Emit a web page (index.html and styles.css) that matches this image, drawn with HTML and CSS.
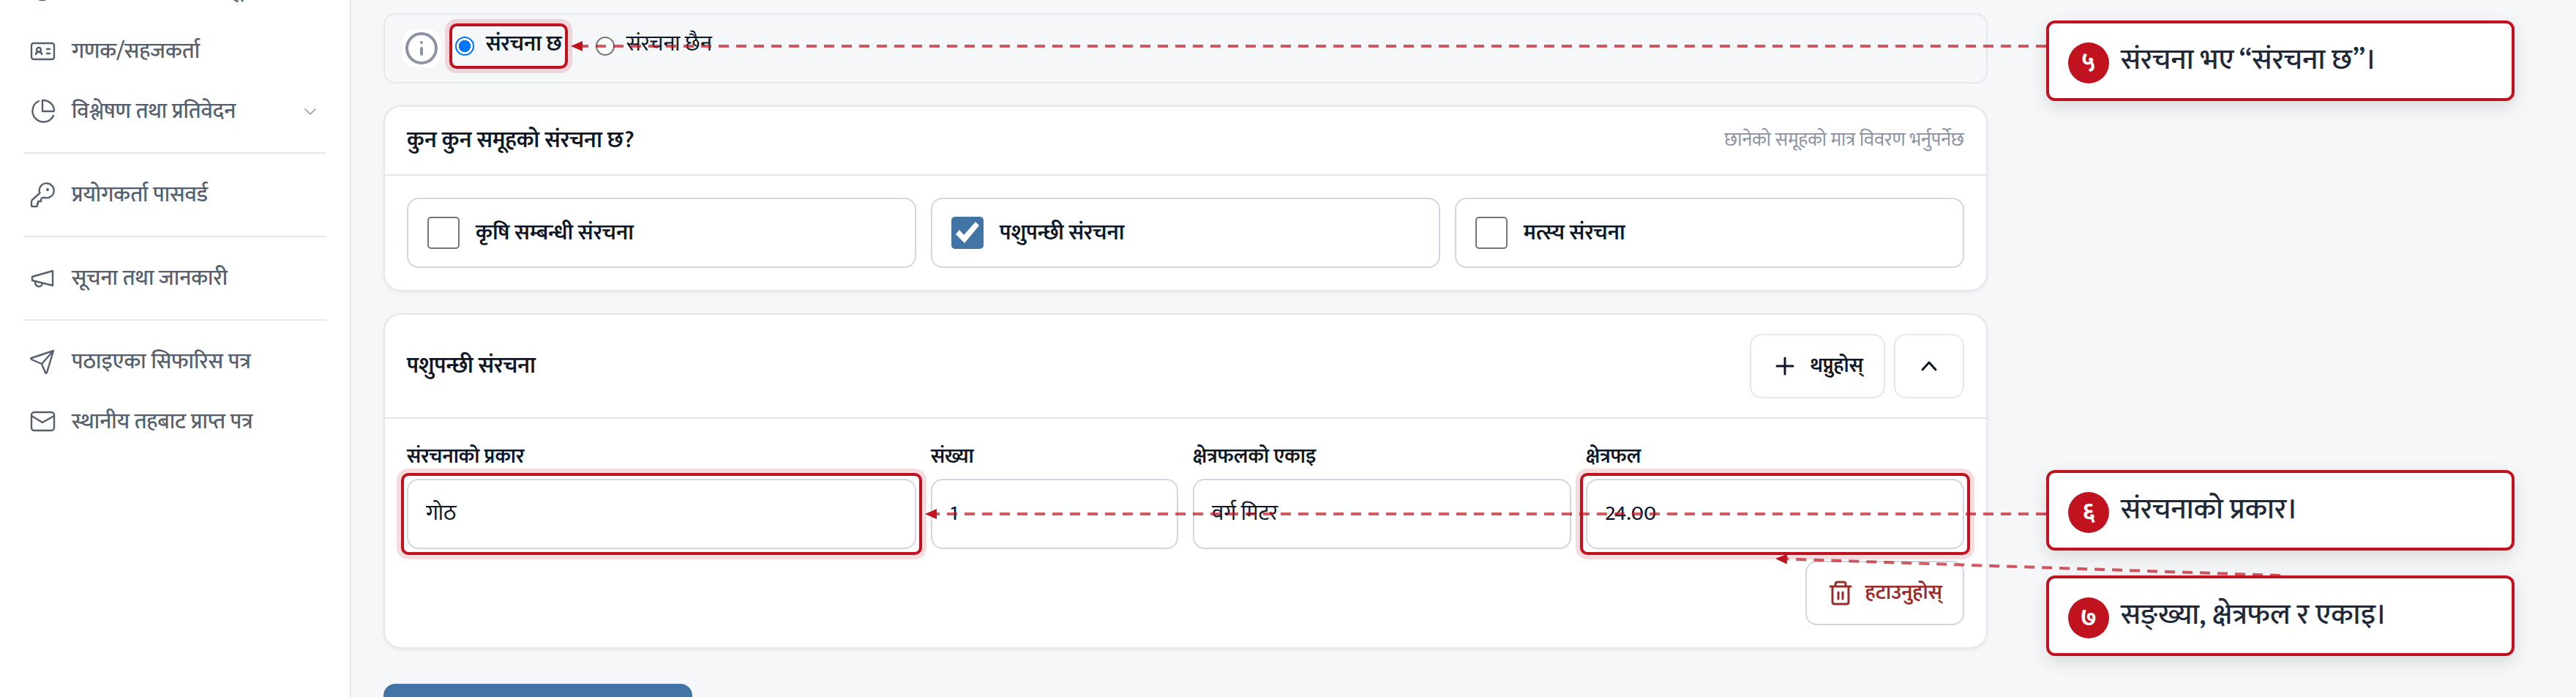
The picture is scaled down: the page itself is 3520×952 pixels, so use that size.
FILE: index.html
```html
<!DOCTYPE html>
<html lang="ne">
<head>
    <meta charset="UTF-8">
    <meta name="viewport" content="width=device-width, initial-scale=1.0">
    <title>पशुपन्छी संरचना</title>
    <link rel="stylesheet" href="styles.css">
</head>

<body>
    <div class="page">
        <nav class="sidebar">
            <a href="#" class="nav-item">
                <svg class="icon" viewBox="0 0 36 36"><circle cx="18" cy="18" r="14"/></svg>
                <span>स्थानीय निकायका समूह</span>
            </a>
            <a href="#" class="nav-item">
                <svg class="icon" viewBox="0 0 36 36">
                    <rect x="3" y="7" width="31" height="22" rx="3"/>
                    <circle cx="13" cy="16" r="3"/>
                    <path d="M9 22c0-4 8-4 8 0M24 15h4M24 21h4"/>
                </svg>
                <span>गणक/सहजकर्ता</span>
            </a>
            <a href="#" class="nav-item">
                <svg class="icon" viewBox="0 0 36 36">
                    <path d="M13 4a15 15 0 1 0 20 20"/>
                    <path d="M18 3v15h15c1 0 1-1 1-2A15 15 0 0 0 20 3c-1 0-2 0-2 0z"/>
                </svg>
                <span>विश्लेषण तथा प्रतिवेदन</span>
                <svg class="chevron" viewBox="0 0 16 16"><path d="M1 5l7 7 7-7"/></svg>
            </a>
            <hr>
            <a href="#" class="nav-item">
                <svg class="icon" viewBox="0 0 36 36">
                    <path d="M14 15a10 10 0 1 1 7 7h-3l-2 2v3h-4v3h-1v3c0 1 0 1-1 1H4c-1 0-1 0-1-1v-5c0-1 0-2 1-3l10-9c1-1 0-1 0-1z"/>
                    <circle class="dot" cx="25" cy="11" r="2"/>
                </svg>
                <span>प्रयोगकर्ता पासवर्ड</span>
            </a>
            <hr>
            <a href="#" class="nav-item">
                <svg class="icon" viewBox="0 0 36 36">
                    <path d="M4 16l28-8v20L4 21z"/>
                    <path d="M8 23c0 8 9 8 10 2"/>
                </svg>
                <span>सूचना तथा जानकारी</span>
            </a>
            <hr>
            <a href="#" class="nav-item">
                <svg class="icon" viewBox="0 0 36 36">
                    <path d="M33 3L3 13c-1 0-1 1 0 2l14 6 5 12c0 1 1 1 2 0L33 3zM17 21L33 3"/>
                </svg>
                <span>पठाइएका सिफारिस पत्र</span>
            </a>
            <a href="#" class="nav-item">
                <svg class="icon" viewBox="0 0 36 36">
                    <rect x="3" y="5" width="31" height="25" rx="4"/>
                    <path d="M3 10l15 9 16-9"/>
                </svg>
                <span>स्थानीय तहबाट प्राप्त पत्र</span>
            </a>
        </nav>

        <main class="content">
            <div class="choice-bar">
                <svg class="info" viewBox="0 0 52 52">
                    <circle cx="26" cy="26" r="20"/>
                    <path d="M26 26v8"/>
                    <circle class="dot" cx="26" cy="18" r="2"/>
                </svg>
                <div class="radio-group">
                    <label class="radio radio-on highlight">
                        <input type="radio" name="structure" checked>
                        संरचना छ
                    </label>
                    <label class="radio">
                        <input type="radio" name="structure">
                        संरचना छैन
                    </label>
                </div>
            </div>

            <section class="card">
                <div class="card-header">
                    <h2>कुन कुन समूहको संरचना छ?</h2>
                    <span class="hint">छानेको समूहको मात्र विवरण भर्नुपर्नेछ</span>
                </div>
                <div class="card-body checks">
                    <label class="check">
                        <input type="checkbox">
                        कृषि सम्बन्धी संरचना
                    </label>
                    <label class="check">
                        <input type="checkbox" checked>
                        पशुपन्छी संरचना
                    </label>
                    <label class="check">
                        <input type="checkbox">
                        मत्स्य संरचना
                    </label>
                </div>
            </section>

            <section class="card">
                <div class="card-header">
                    <h2>पशुपन्छी संरचना</h2>
                    <div class="actions">
                        <button type="button" class="btn">
                            <svg class="btn-icon" viewBox="0 0 36 36"><path d="M18 7v22M7 18h22"/></svg>
                            थप्नुहोस्
                        </button>
                        <button type="button" class="btn" aria-label="बन्द गर्नुहोस्">
                            <svg class="btn-icon" viewBox="0 0 36 36"><path d="M9 23l9-10 9 10"/></svg>
                        </button>
                    </div>
                </div>
                <div class="card-body">
                    <div class="fields">
                        <div class="field wide">
                            <label for="type">संरचनाको प्रकार</label>
                            <div class="highlight"><input type="text" id="type" value="गोठ"></div>
                        </div>
                        <div class="field narrow">
                            <label for="count">संख्या</label>
                            <div><input type="text" id="count" value="1"></div>
                        </div>
                        <div class="field">
                            <label for="unit">क्षेत्रफलको एकाइ</label>
                            <div><input type="text" id="unit" value="वर्ग मिटर"></div>
                        </div>
                        <div class="field">
                            <label for="area">क्षेत्रफल</label>
                            <div class="highlight"><input type="text" id="area" value="24.00"></div>
                        </div>
                    </div>
                    <div class="row-end">
                        <button type="button" class="btn btn-delete">
                            <svg class="btn-icon" viewBox="0 0 36 36">
                                <path d="M4 9h28M11 9V6c0-2 1-3 3-3h8c2 0 3 1 3 3v3M7 9v21c0 2 1 3 3 3h16c2 0 3-1 3-3V9M15 17v9M21 17v9"/>
                            </svg>
                            हटाउनुहोस्
                        </button>
                    </div>
                </div>
            </section>

            <button type="submit" class="btn-save" aria-label="सुरक्षित गर्नुहोस्"></button>
        </main>

        <!-- guide arrows and notes over the form -->
        <svg class="arrows">
            <defs>
                <marker id="head" markerUnits="userSpaceOnUse" markerWidth="16" markerHeight="14" refX="16" refY="7" orient="auto">
                    <path d="M0 0L16 7L0 14z"/>
                </marker>
            </defs>
            <line x1="2796" y1="63" x2="780" y2="63" marker-end="url(#head)"/>
            <line x1="2796" y1="702" x2="1264" y2="702" marker-end="url(#head)"/>
            <line x1="3116" y1="786" x2="2426" y2="763" marker-end="url(#head)"/>
        </svg>
        <div class="note note-5"><b>५</b><span>संरचना भए “संरचना छ”।</span></div>
        <div class="note note-6"><b>६</b><span>संरचनाको प्रकार।</span></div>
        <div class="note note-7"><b>७</b><span>सङ्ख्या, क्षेत्रफल र एकाइ।</span></div>
    </div>
</body>
</html>
```

FILE: styles.css
```css
* {
    box-sizing: border-box;
}
body {
    margin: 0;
    font-family: "Mukta", "Noto Sans", "Open Sans", sans-serif;
    font-size: 30px;
    line-height: 40px;
    color: #0d1728;
    background-color: #f5f7f9;
}
.page {
    position: relative;
    display: flex;
    height: 100vh;
    overflow: hidden;
}
svg {
    flex: none;
    fill: none;
    stroke: currentColor;
    stroke-linecap: round;
    stroke-linejoin: round;
}
svg .dot {
    fill: currentColor;
    stroke: none;
}

/* sidebar */
.sidebar {
    flex: none;
    width: 480px;
    padding: 0 32px;
    background-color: white;
    border-right: 2px solid #e6e7ec;
}
.nav-item {
    display: flex;
    align-items: center;
    gap: 22px;
    height: 80px;
    padding: 0 14px 0 8px;
    margin-bottom: 2px;
    color: #565f6e;
    font-weight: 500;
    text-decoration: none;
}
.nav-item:first-child {
    margin-top: -54px;
    margin-bottom: 4px;
}
.icon {
    width: 36px;
    height: 36px;
    stroke-width: 2.4;
}
.chevron {
    width: 16px;
    height: 16px;
    margin-left: auto;
    stroke-width: 1.6;
    color: #9298a6;
}
.sidebar hr {
    height: 2px;
    margin: 16px 0;
    border: none;
    background-color: #e6e7ec;
}

/* form */
.content {
    flex: 1;
    padding: 18px 804px 0 44px;
}
.choice-bar {
    display: flex;
    align-items: flex-start;
    gap: 20px;
    padding: 20px 24px;
    border: 2px solid #e6e7ec;
    border-radius: 16px;
}
.info {
    width: 52px;
    height: 52px;
    border-radius: 16px;
    background-color: white;
    color: #8d93a5;
    stroke-width: 4;
}
.radio-group {
    display: flex;
    gap: 46px;
}
.radio {
    display: flex;
    gap: 16px;
    height: 46px;
}
.radio-on {
    font-weight: 600;
}
.radio input {
    appearance: none;
    width: 26px;
    height: 26px;
    margin: 10px 0 0;
    border: 2px solid #767676;
    border-radius: 50%;
    background-color: white;
}
.radio input:checked {
    border-color: #0075ff;
    background: radial-gradient(circle, #0075ff 8px, white 8px);
}
.highlight {
    position: relative;
}
.highlight::after {
    content: "";
    position: absolute;
    inset: -8px;
    border: 4px solid #c1121f;
    border-radius: 10px;
    box-shadow: 0 0 0 6px rgba(193, 18, 31, 0.15);
    pointer-events: none;
}
.card {
    margin-top: 30px;
    background-color: white;
    border: 2px solid #e6e7ec;
    border-radius: 24px;
    box-shadow: 0 2px 6px rgba(16, 24, 40, 0.06);
}
.card-header {
    display: flex;
    align-items: center;
    justify-content: space-between;
    padding: 26px 30px;
    border-bottom: 2px solid #e6e7ec;
}
.card-header h2 {
    margin: 0;
    font-size: 31px;
    font-weight: 600;
}
.hint {
    font-size: 26px;
    color: #8d93a5;
}
.card-body {
    padding: 30px;
}
.checks {
    display: grid;
    grid-template-columns: repeat(3, 1fr);
    gap: 20px;
}
.check {
    display: flex;
    align-items: center;
    gap: 22px;
    height: 96px;
    padding: 0 26px;
    border: 2px solid #d2d6e0;
    border-radius: 16px;
    font-weight: 600;
}
.check input {
    appearance: none;
    width: 44px;
    height: 44px;
    margin: 0;
    border: 2px solid #767676;
    border-radius: 5px;
}
.check input:checked {
    border: none;
    background-color: #4274a6;
}
.check input:checked::before {
    content: "";
    display: block;
    height: 44px;
    background-color: white;
    clip-path: polygon(6px 24px, 11px 18px, 17px 25px, 33px 7px, 38px 12px, 18px 36px);
}
.actions {
    display: flex;
    gap: 12px;
}
.btn {
    display: flex;
    align-items: center;
    gap: 16px;
    height: 88px;
    padding: 0 28px;
    border: 2px solid #e6e7ec;
    border-radius: 16px;
    background-color: white;
    color: inherit;
    font: inherit;
    font-size: 28px;
    font-weight: 600;
}
.btn-icon {
    width: 36px;
    height: 36px;
    stroke-width: 3;
}
.btn-delete {
    border-color: #d2d6e0;
    color: #9b2c2c;
}
.fields {
    display: grid;
    grid-template-columns: repeat(12, 1fr);
    gap: 20px;
}
.field {
    grid-column: span 3;
}
.field.wide {
    grid-column: span 4;
}
.field.narrow {
    grid-column: span 2;
}
.field label {
    display: block;
    margin-bottom: 8px;
    font-size: 28px;
    font-weight: 600;
    line-height: 44px;
}
.field input {
    display: block;
    width: 100%;
    height: 96px;
    padding: 0 24px 2px;
    border: 2px solid #d2d6e0;
    border-radius: 16px;
    background-color: white;
    color: inherit;
    font: inherit;
}
.row-end {
    display: flex;
    justify-content: flex-end;
    margin-top: 16px;
}
.btn-save {
    display: block;
    width: 422px;
    height: 96px;
    margin-top: 48px;
    border: none;
    border-radius: 16px;
    background-color: #4274a6;
}

/* notes */
.arrows {
    position: absolute;
    top: 0;
    left: 0;
    width: 100%;
    height: 100%;
    stroke: #c1121f;
    stroke-width: 4;
    stroke-opacity: 0.7;
    stroke-linecap: butt;
    stroke-dasharray: 14 10;
    pointer-events: none;
}
.arrows marker path {
    fill: #c1121f;
    stroke: none;
}
.note {
    position: absolute;
    right: 84px;
    display: flex;
    gap: 16px;
    width: 640px;
    height: 110px;
    padding: 26px;
    border: 4px solid #c1121f;
    border-radius: 12px;
    background-color: white;
    box-shadow: 0 8px 24px rgba(0, 0, 0, 0.12);
    color: #1e293b;
    font-size: 40px;
    font-weight: 500;
    line-height: 48px;
}
.note b {
    width: 56px;
    height: 56px;
    border-radius: 50%;
    background-color: #c1121f;
    color: white;
    font-size: 34px;
    line-height: 56px;
    text-align: center;
}
.note-5 {
    top: 28px;
}
.note-6 {
    top: 642px;
}
.note-7 {
    top: 786px;
}
```
